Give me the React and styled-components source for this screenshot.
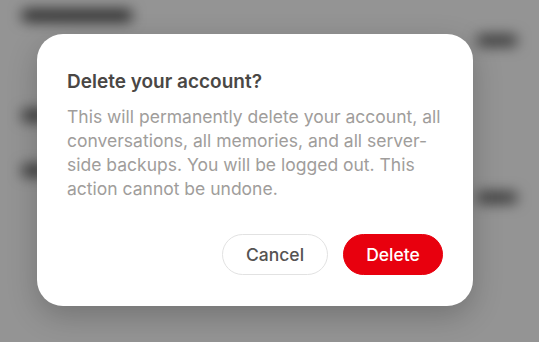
import styled, { createGlobalStyle } from "styled-components";

const GlobalStyle = createGlobalStyle`
  html, body {
    margin: 0;
    padding: 0;
    width: 100%;
    height: 100%;
    overflow: hidden;
  }
  body {
    font-family: Inter, "Noto Sans", sans-serif;
  }
`;

const Page = styled.div`
  position: relative;
  width: 539px;
  height: 342px;
  background: #ffffff;
  overflow: hidden;
`;

const Backdrop = styled.div`
  display: flex;
  flex-direction: column;
  padding: 10px 22px;
  filter: blur(7px);
`;

const BgRow = styled.div`
  display: flex;
  justify-content: space-between;
  align-items: center;
  margin-top: ${(p) => p.gap || 0}px;
`;

const BgText = styled.div`
  height: ${(p) => p.h || 11}px;
  width: ${(p) => p.w}px;
  background: ${(p) => p.tone || "#333"};
  border-radius: 4px;
`;

const Overlay = styled.div`
  position: absolute;
  inset: 0;
  background: rgba(0, 0, 0, 0.42);
  display: flex;
  align-items: center;
  justify-content: flex-start;
  padding: 0 0 2px 37px;
`;

const Dialog = styled.div`
  width: 436px;
  box-sizing: border-box;
  background: #fff;
  border-radius: 26px;
  padding: 34px 30px 31px;
  box-shadow: 0 10px 30px rgba(0, 0, 0, 0.22);
`;

const Title = styled.h2`
  margin: 0 0 9px;
  font-size: 19px;
  line-height: 28px;
  font-weight: 600;
  color: #4a4745;
`;

const Body = styled.p`
  margin: 0;
  font-size: 17.5px;
  line-height: 24px;
  color: #a09d9b;
`;

const Actions = styled.div`
  display: flex;
  justify-content: flex-end;
  gap: 15px;
  margin-top: 33px;
`;

const Button = styled.button`
  height: 41px;
  width: ${(p) => p.w}px;
  padding: 0;
  border-radius: 21px;
  font-family: Inter, sans-serif;
  font-size: 17.5px;
  font-weight: 500;
  cursor: pointer;
  border: 1px solid ${(p) => (p.danger ? "#e8000e" : "#e2e2e2")};
  background: ${(p) => (p.danger ? "#e8000e" : "#fff")};
  color: ${(p) => (p.danger ? "#fff" : "#555352")};
`;

export default function App() {
  return (
    <>
      <GlobalStyle />
      <Page>
        <Backdrop>
          <BgRow>
            <BgText w={110} />
            <BgText w={0} />
          </BgRow>
          <BgRow gap={14}>
            <BgText w={0} />
            <BgText w={40} tone="#555" />
          </BgRow>
          <BgRow gap={64}>
            <BgText w={24} tone="#444" />
            <BgText w={0} />
          </BgRow>
          <BgRow gap={44}>
            <BgText w={24} tone="#444" />
            <BgText w={0} />
          </BgRow>
          <BgRow gap={16}>
            <BgText w={0} />
            <BgText w={40} tone="#555" />
          </BgRow>
        </Backdrop>
        <Overlay>
          <Dialog role="dialog">
            <Title>Delete your account?</Title>
            <Body>
              This will permanently delete your account, all conversations, all
              memories, and all server-side backups. You will be logged out.
              This action cannot be undone.
            </Body>
            <Actions>
              <Button w={106}>Cancel</Button>
              <Button danger w={100}>Delete</Button>
            </Actions>
          </Dialog>
        </Overlay>
      </Page>
    </>
  );
}
